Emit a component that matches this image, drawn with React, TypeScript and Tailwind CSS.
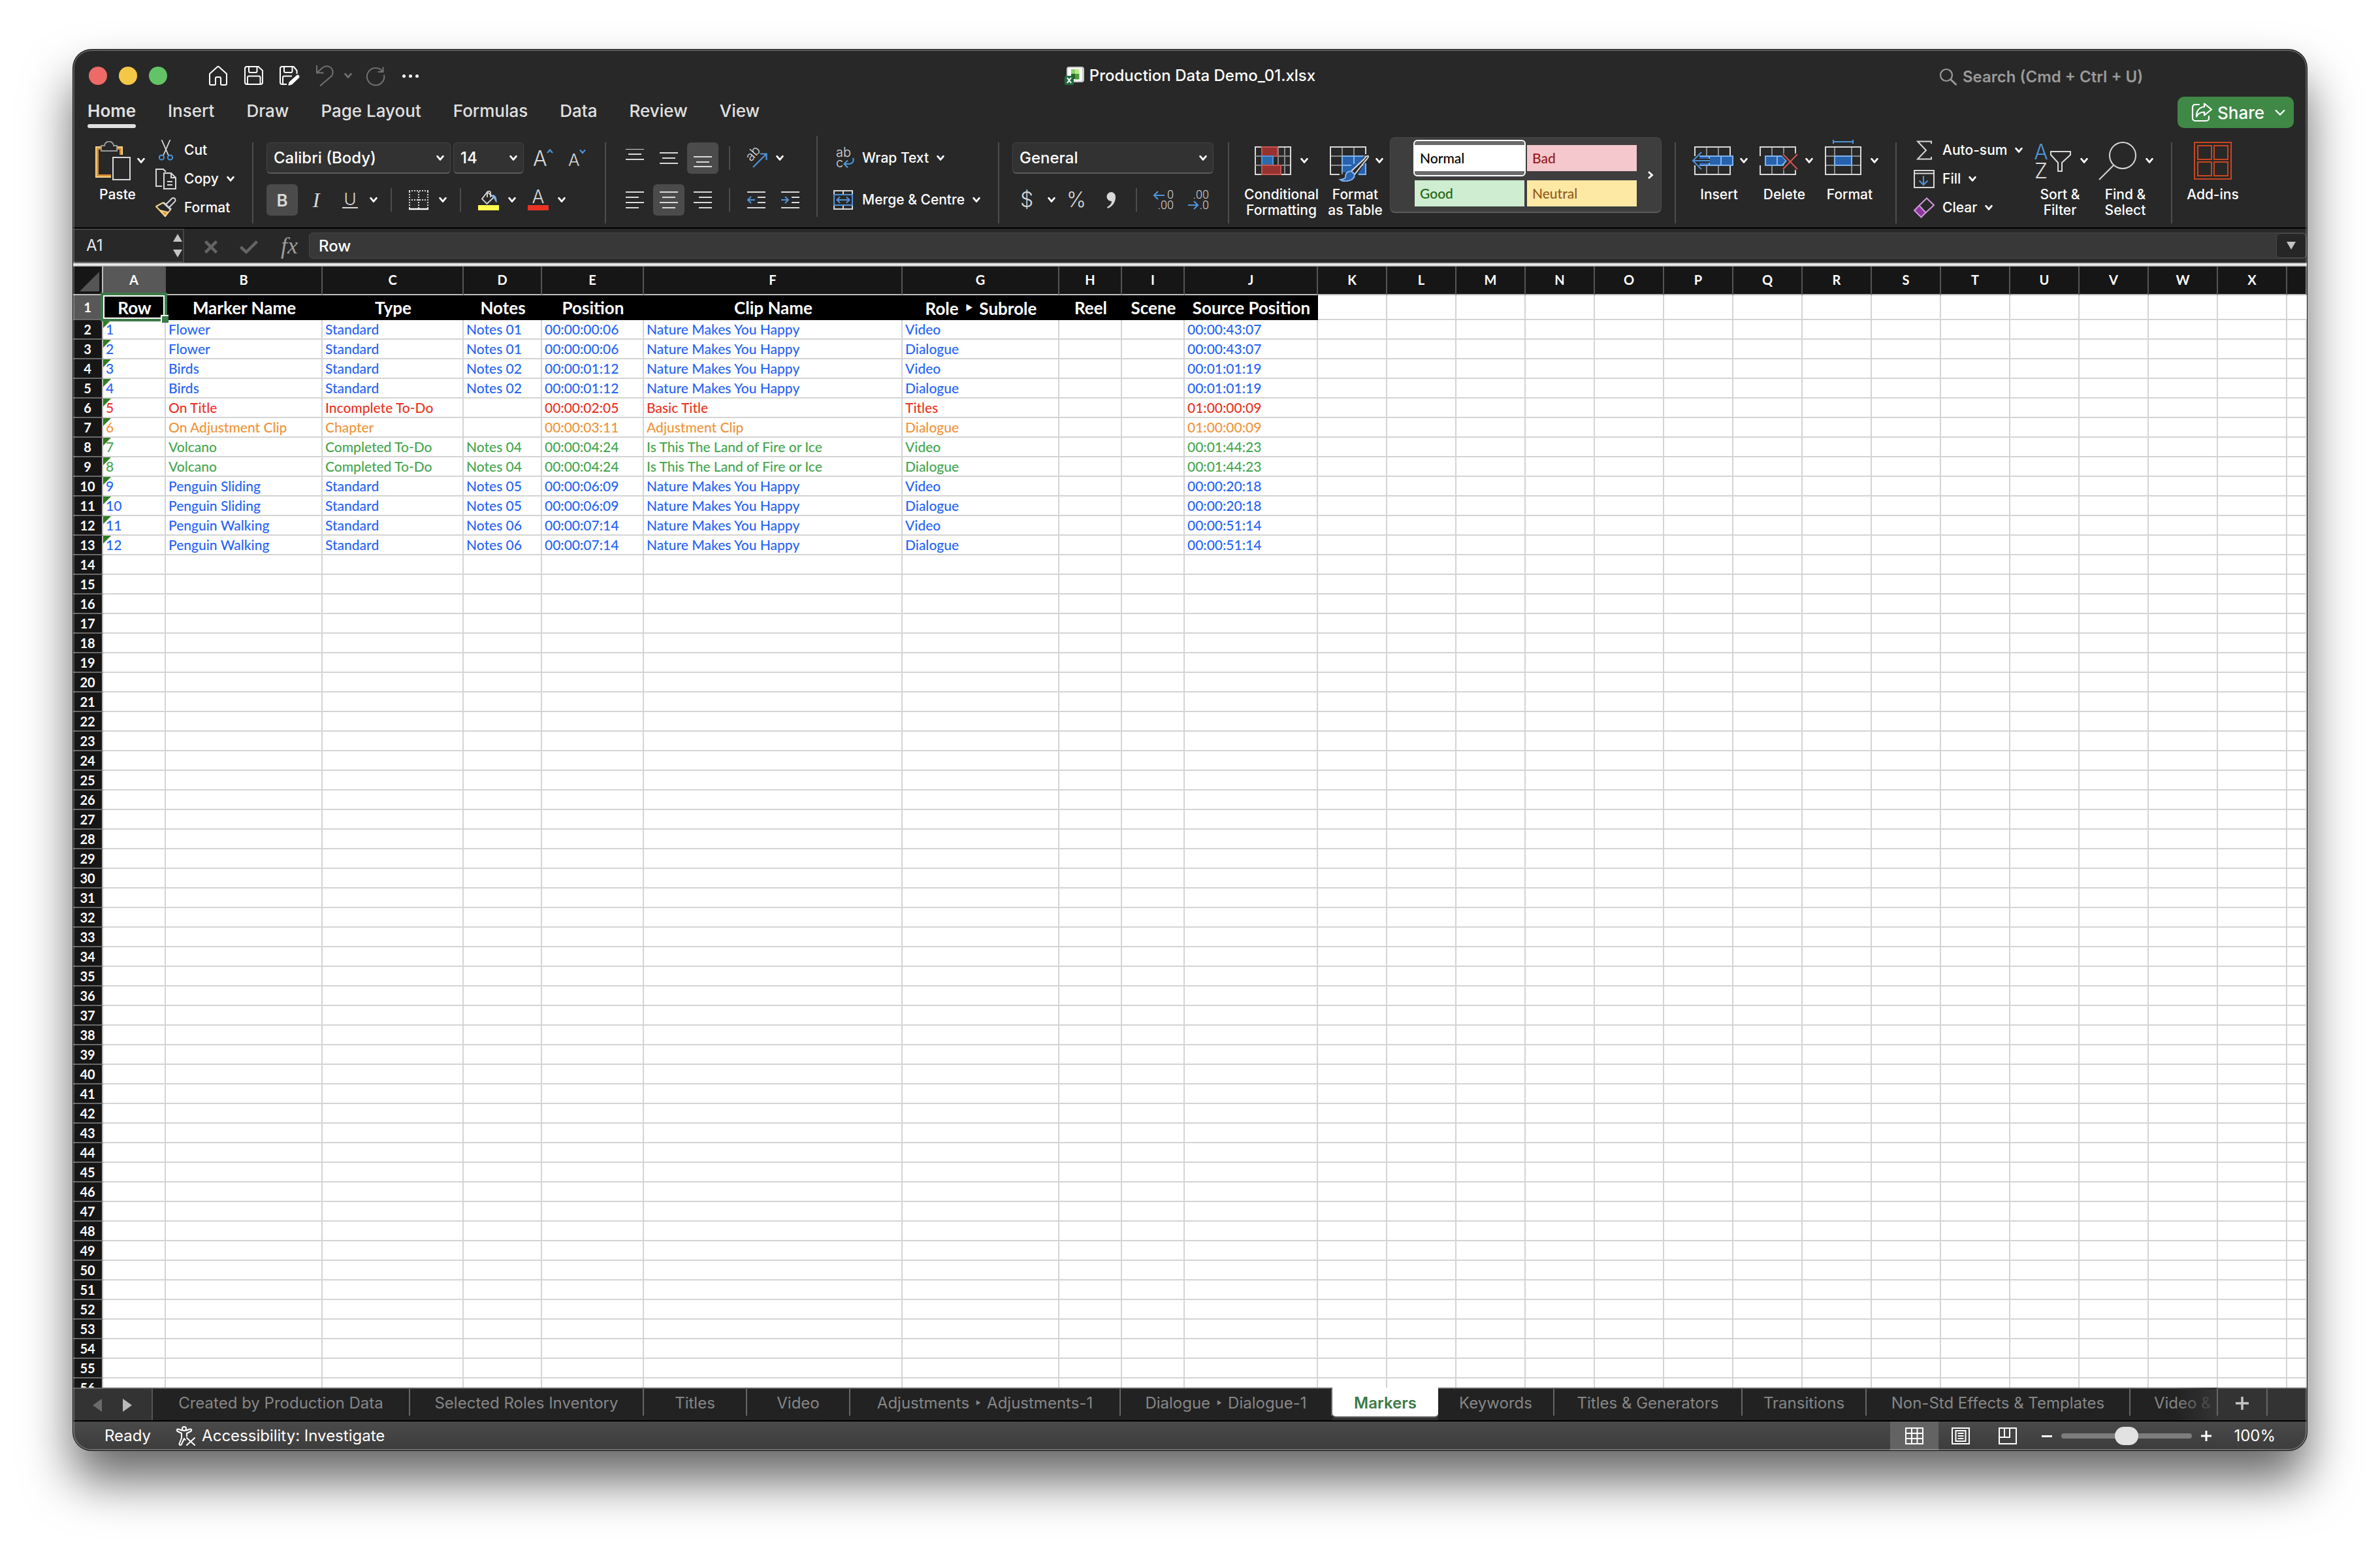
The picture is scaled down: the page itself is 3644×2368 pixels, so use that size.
import React from "react";
import type { ReactNode } from "react";

/* ---------- small pieces ---------- */

const Chevron = ({ className = "" }: { className?: string }) => (
  <svg className={"h-[10px] w-3 shrink-0 " + className} viewBox="0 0 12 10" fill="none" stroke="currentColor" strokeWidth="2.8" strokeLinecap="round" strokeLinejoin="round">
    <path d="M1.6 2.2 6 7.4 10.4 2.2" />
  </svg>
);

const Divider = ({ className = "mt-3" }: { className?: string }) => (
  <div className={"h-[124px] w-0.5 shrink-0 bg-[#4d4d4d] " + className} />
);

const Sep = ({ className = "" }: { className?: string }) => <div className={"h-9 w-0.5 shrink-0 bg-[#4d4d4d] " + className} />;

const BigButton = ({ icon, lines, width, inner }: { icon: ReactNode; lines: string[]; width: string; inner: string }) => (
  <button type="button" className={"flex shrink-0 flex-col text-[21px] leading-6 font-medium text-white " + width}>
    <span className={"flex h-20 w-full items-center " + inner}>
      {icon}
      <Chevron />
    </span>
    <span className="w-full text-center whitespace-nowrap">
      {lines.map((l) => (
        <span key={l} className="block">
          {l}
        </span>
      ))}
    </span>
  </button>
);

const SmallButton = ({ icon, label, chevron = true }: { icon: ReactNode; label: string; chevron?: boolean }) => (
  <button type="button" className="flex h-11 items-center gap-3 text-[21px] leading-6 font-medium whitespace-nowrap text-white">
    <span className="flex w-8 shrink-0 justify-center">{icon}</span>
    {label}
    {chevron && <Chevron />}
  </button>
);

const IconButton = ({ label, active = false, children }: { label: string; active?: boolean; children: ReactNode }) => (
  <button type="button" aria-label={label} className={"flex size-12 shrink-0 items-center justify-center rounded-md text-[#d9d9d9] " + (active ? "bg-[#4b4b4b]" : "")}>
    {children}
  </button>
);

const Picker = ({ label, value, width }: { label: string; value: string; width: string }) => (
  <div className={"relative h-12 shrink-0 " + width}>
    <select aria-label={label} className="h-full w-full appearance-none rounded-md border border-b-2 border-[#454545] border-b-[#5a5a5a] bg-[#323232] pl-2.5 text-2xl font-medium text-white">
      <option>{value}</option>
    </select>
    <Chevron className="pointer-events-none absolute top-[19px] right-2.5 text-white" />
  </div>
);

const Lines = ({ rows }: { rows: [number, number, number][] }) => (
  <svg className="h-7 w-7" viewBox="0 0 28 28" stroke="currentColor" strokeWidth="2" fill="none">
    {rows.map(([x1, x2, y]) => (
      <path key={y} d={`M${x1} ${y}H${x2}`} />
    ))}
  </svg>
);

/* ---------- icons ---------- */

const HomeIcon = () => (
  <svg className="h-8 w-[30px]" viewBox="0 0 30 32" fill="none" stroke="#fff" strokeWidth="2" strokeLinejoin="round">
    <path d="M2 13 13.6 2.6a2 2 0 0 1 2.8 0L28 13v15a2 2 0 0 1-2 2h-5.500a1.500 1.500 0 0 1-1.500-1.500V20a2 2 0 0 0-2-2h-4a2 2 0 0 0-2 2v8.500A1.500 1.500 0 0 1 9.500 30H4a2 2 0 0 1-2-2Z" />
  </svg>
);

const SaveIcon = ({ pen = false }: { pen?: boolean }) => (
  <svg className="h-[30px] w-[32px]" viewBox="0 0 32 30" fill="none" stroke="#fff" strokeWidth="2" strokeLinejoin="round">
    {pen ? (
      <>
        <path d="M27.500 12V7L22.500 1H5a3 3 0 0 0-3 3v21a3 3 0 0 0 3 3h7" />
        <path d="M8 1v7a2 2 0 0 0 2 2h8.500a2 2 0 0 0 2-2V1" />
        <path d="M6 28V17.500a2 2 0 0 1 2-2h12" />
        <path d="M28 13.500a3 3 0 0 1 3.200 4.200L20 28.500l-5.800 1.500 1.500-5.600Z" fill="#fff" stroke="none" />
      </>
    ) : (
      <>
        <path d="M5 1h17.500l6.500 6v18a3 3 0 0 1-3 3H5a3 3 0 0 1-3-3V4a3 3 0 0 1 3-3Z" />
        <path d="M8 1v7a2 2 0 0 0 2 2h8.500a2 2 0 0 0 2-2V1" />
        <path d="M6 28V17.500a2 2 0 0 1 2-2h15.500a2 2 0 0 1 2 2V28" />
      </>
    )}
  </svg>
);

const UndoIcon = () => (
  <svg className="h-8 w-[28px]" viewBox="0 0 28 32" fill="none" stroke="#727272" strokeWidth="2">
    <path d="M2 0v11.500h10.500M2 11.500 11 3.600a9.400 9.400 0 0 1 13.500 13L7 31.500" />
  </svg>
);

const RedoIcon = () => (
  <svg className="h-8 w-[30px]" viewBox="0 0 30 32" fill="none" stroke="#727272" strokeWidth="2">
    <path d="M26.500 2.500v7.500H18.500" />
    <path d="M28 14.500A13.200 13.200 0 1 1 26 9.800" />
  </svg>
);

const ExcelIcon = () => (
  <svg className="h-[30px] w-[30px]" viewBox="0 0 30 30">
    <rect x="3" y="1" width="27" height="24" rx="4" fill="#c9c9c9" />
    <rect x="5" y="3" width="22" height="20" rx="2" fill="#fbfbfb" />
    <rect x="10" y="5" width="6" height="7" fill="#8fd36c" />
    <rect x="16" y="5" width="6.500" height="7" fill="#b5ec8c" />
    <rect x="10" y="12" width="6" height="8" fill="#2c6427" />
    <rect x="16" y="12" width="6.500" height="8.500" fill="#4f9f3d" />
    <rect x="0" y="15" width="14" height="14" rx="2" fill="#1f6b3f" />
    <path d="m4 18 6 8M10 18l-6 8" stroke="#fff" strokeWidth="2" />
  </svg>
);

const PasteIcon = () => (
  <svg className="h-[60px] w-[54px] shrink-0" viewBox="0 0 54 60" fill="none">
    <path d="M8 9H1v46h23M34 9h7v12" stroke="#f4d58a" strokeWidth="2" />
    <path d="M8 11.500H3.500v41H24M34 11.500h4.500V21" stroke="#d99038" strokeWidth="3" />
    <path d="M9 7h5a7 6.500 0 0 1 14 0h5v8H9Z" stroke="#9b9b9b" strokeWidth="2" />
    <rect x="27" y="25" width="26" height="34" stroke="#d9d9d9" strokeWidth="2" />
  </svg>
);

const CutIcon = () => (
  <svg className="h-8 w-[22px]" viewBox="0 0 22 32" fill="none" strokeWidth="2">
    <path d="M4.500 0 15 24M17.500 0 7 24" stroke="#d9d9d9" strokeWidth="1.800" />
    <circle cx="4.500" cy="27" r="3.600" stroke="#4f94d8" />
    <circle cx="17.500" cy="27" r="3.600" stroke="#4f94d8" />
  </svg>
);

const CopyIcon = () => (
  <svg className="h-8 w-8" viewBox="0 0 32 32" fill="none" stroke="#d9d9d9" strokeWidth="2">
    <path d="M10 27H1V1h11l4 4" />
    <path d="M13 7h11l7 7v17H13ZM24 7v7h7M18 20h8M18 25h8" />
  </svg>
);

const BrushIcon = () => (
  <svg className="h-8 w-8" viewBox="0 0 32 32" fill="none" strokeWidth="2" strokeLinejoin="round">
    <path d="m16 11 9-9a3.200 3.200 0 0 1 4.600 4.600L21 15.500" stroke="#d9d9d9" />
    <path d="M12 8 1 14l14 15 8-10" stroke="#f4d58a" />
    <path d="m7 20 12 3-4 6Z" fill="#d99038" stroke="#f4d58a" />
    <path d="M12 8 24 19" stroke="#d9d9d9" strokeWidth="3" />
  </svg>
);

const ResizeLetter = ({ up }: { up: boolean }) => (
  <svg className="h-8 w-[30px] overflow-visible" viewBox="0 0 30 32" fill="none">
    <text x="0" y="28" fontFamily="Inter" fontWeight="300" fontSize={up ? 32 : 26} fill="#d9d9d9">
      A
    </text>
    <path d={up ? "m22 8 4-4.500 4 4.500" : "m18 3.500 4 4.500 4-4.500"} stroke="#4f94d8" strokeWidth="2.200" />
  </svg>
);

const BorderIcon = () => (
  <svg className="h-8 w-[30px]" viewBox="0 0 30 32" fill="none" stroke="#d9d9d9" strokeWidth="2">
    <path d="M0 2h30M0 16h30M1 3v26M15 3v26M29 3v26" strokeDasharray="2 2" />
    <path d="M0 30h30" stroke="#fff" strokeWidth="2.400" />
  </svg>
);

const FillColorIcon = () => (
  <svg className="h-8 w-8" viewBox="0 0 32 32" fill="none" strokeWidth="1.800">
    <rect y="24" width="32" height="8" fill="#ffff4f" />
    <path d="m14 4-8 10.500 7.500 7.500L24 12Z" stroke="#d9d9d9" />
    <path d="M14 12V4a3 3 0 0 1 5 0v8" stroke="#d9d9d9" />
    <path d="M22 8c5 0 7 5 6.500 12-3-1-3-7-6.500-8Z" fill="#7fb4e6" />
  </svg>
);

const FontColorIcon = () => (
  <svg className="h-8 w-8 overflow-visible" viewBox="0 0 32 32">
    <rect y="24" width="32" height="8" fill="#e93323" />
    <text x="16" y="21" textAnchor="middle" fontFamily="Inter" fontWeight="300" fontSize="28" fill="#d9d9d9">
      A
    </text>
  </svg>
);

const OrientationIcon = () => (
  <svg className="h-8 w-8 overflow-visible" viewBox="0 0 32 32" fill="none">
    <text x="8" y="22" transform="rotate(-48 8 22)" fontFamily="Inter" fontWeight="300" fontSize="20" fill="#d9d9d9">
      ab
    </text>
    <path d="M11 30 31 10M22 9.500h9.500V19" stroke="#4f94d8" strokeWidth="2.200" />
  </svg>
);

const DentIcon = ({ out }: { out: boolean }) => (
  <svg className="h-7 w-7 shrink-0" viewBox="0 0 28 28" fill="none" stroke="#d9d9d9" strokeWidth="2">
    <path d="M0 2h28M16 10h12M16 18h12M0 26h28" />
    <path d={out ? "M12 14H1M6 9l-5 5 5 5" : "M0 14h11M6 9l5 5-5 5"} stroke="#4f94d8" />
  </svg>
);

const WrapIcon = () => (
  <svg className="h-8 w-8 shrink-0 overflow-visible" viewBox="0 0 32 32" fill="none">
    <text x="4" y="14" fontFamily="Inter" fontWeight="300" fontSize="20" fill="#d9d9d9">
      ab
    </text>
    <text x="4" y="30" fontFamily="Inter" fontWeight="300" fontSize="20" fill="#d9d9d9">
      c
    </text>
    <path d="M30 16c2 5-1 9-7 9h-6M22 19.500 16.500 25l5.500 5.500" stroke="#4f94d8" strokeWidth="2.200" />
  </svg>
);

const MergeIcon = () => (
  <svg className="h-8 w-8 shrink-0" viewBox="0 0 32 32" fill="none" strokeWidth="2">
    <path d="M1 7V2h28v5M1 25v5h28v-5M15 2v5M15 25v5" stroke="#d9d9d9" />
    <rect x="1" y="8" width="28" height="16" stroke="#4f94d8" />
    <path d="M6 16h18M10 11.500 5.500 16l4.500 4.500M20 11.500l4.500 4.500-4.500 4.500" stroke="#4f94d8" />
  </svg>
);

const DecimalIcon = ({ more }: { more: boolean }) => (
  <svg className="h-8 w-8 shrink-0 overflow-visible" viewBox="0 0 32 32" fill="none">
    <text x="32" y="14" textAnchor="end" fontFamily="Roboto" fontWeight="300" fontSize="18" fill="#d9d9d9">
      {more ? "0" : ".00"}
    </text>
    <text x="32" y="30" textAnchor="end" fontFamily="Roboto" fontWeight="300" fontSize="18" fill="#d9d9d9">
      {more ? ".00" : ".0"}
    </text>
    <path d={more ? "M18 9H2M8 3 2 9l6 6" : "M0 24h15M9 18l6 6-6 6"} stroke="#4f94d8" strokeWidth="2.200" />
  </svg>
);

const ConditionalIcon = () => (
  <svg className="h-11 w-14 shrink-0" viewBox="0 0 56 44" fill="none" strokeWidth="2">
    <path d="M10 15h45M10 29h45M46 1v42M36 1v42" stroke="#8c8c8c" />
    <rect x="1" y="1" width="54" height="42" stroke="#d9d9d9" />
    <path d="M1 15h9M1 29h9" stroke="#8c8c8c" />
    <rect x="11" y="1" width="24" height="14" fill="#963331" stroke="#c9544f" />
    <rect x="11" y="15" width="17" height="14" fill="#2f6aa8" stroke="#4f94d8" />
    <rect x="11" y="29" width="29" height="14" fill="#963331" stroke="#c9544f" />
  </svg>
);

const TableIcon = () => (
  <svg className="mt-2.5 h-[54px] w-[60px] shrink-0" viewBox="0 0 60 54" fill="none" strokeWidth="2">
    <path d="M1 15h54M1 29h54M19 1v42M37 1v42" stroke="#8c8c8c" />
    <path d="M55 12V1H1v42h14" stroke="#d9d9d9" />
    <path d="M19 15h34L38 40H19Z" fill="#2862ad" stroke="none" />
    <path d="M42 43h13V24Z" fill="#2862ad" />
    <path d="M19 40V15h32M19 29h14M37 15v12M44 43h11V26" stroke="#7fb4f0" />
    <path d="M59 15c-2-1-5 2-7 5L33 38l5 5 15-19c3-4 7-7 6-9Z" fill="#282828" stroke="#d9d9d9" />
    <path d="M33 38c-7 0-9 4-9 9 0 2-4 4-8 4 5 4 22 3 22-8Z" fill="#2862ad" stroke="#7fb4f0" />
  </svg>
);

const GridBase = ({ x = 0 }: { x?: number }) => (
  <>
    <path d={`M${x + 19} 1v42M${x + 37} 1v42`} stroke="#8c8c8c" />
    <path d={`M${x + 1} 15V1h54v14M${x + 1} 29v14h54V29`} stroke="#d9d9d9" />
  </>
);

const InsertIcon = () => (
  <svg className="h-11 w-16 shrink-0" viewBox="0 0 64 44" fill="none" strokeWidth="2">
    <GridBase x={4} />
    <rect x="12" y="14" width="51" height="15" fill="#2862ad" />
    <path d="M12 15h51v14H12M27 15v14M45 15v14" stroke="#7fb4f0" />
    <path d="M28 22H4" stroke="#282828" strokeWidth="6" />
    <path d="M28 22H2M15 9 2 22l13 13" stroke="#4f94d8" />
  </svg>
);

const DeleteIcon = () => (
  <svg className="h-11 w-[60px] shrink-0" viewBox="0 0 60 44" fill="none" strokeWidth="2">
    <GridBase />
    <path d="M9 15h26l6 7-6 7H9Z" fill="#2862ad" stroke="#7fb4f0" />
    <path d="M27 15v14" stroke="#7fb4f0" />
    <path d="m36 12 22 23M58 12 36 35" stroke="#282828" strokeWidth="6" />
    <path d="m36 12 22 23M58 12 36 35" stroke="#d9524d" />
  </svg>
);

const FormatIcon = () => (
  <svg className="mb-2.5 h-[54px] w-14 shrink-0" viewBox="0 0 56 54" fill="none" strokeWidth="2">
    <path d="M13 0v6M43 0v6M13 3h30" stroke="#4f94d8" />
    <path d="M1 25h54M1 39h54M15 11v42M41 11v42" stroke="#8c8c8c" />
    <rect x="1" y="11" width="54" height="42" stroke="#d9d9d9" />
    <rect x="15" y="25" width="26" height="14" fill="#2862ad" stroke="#7fb4f0" />
  </svg>
);

const SumIcon = () => (
  <svg className="h-[30px] w-6" viewBox="0 0 24 30" fill="none" stroke="#d9d9d9" strokeWidth="2">
    <path d="M23 5V1.500H2L15 15 2 28.500h21V25" />
  </svg>
);

const FillIcon = () => (
  <svg className="h-7 w-8" viewBox="0 0 32 28" fill="none" stroke="#d9d9d9" strokeWidth="2">
    <rect x="1" y="1" width="30" height="26" />
    <path d="M1 5.500h30" />
    <path d="M15 9v14M8.500 16.500 15 23l6.500-6.500" stroke="#4f94d8" />
  </svg>
);

const ClearIcon = () => (
  <svg className="h-8 w-8" viewBox="0 0 32 32" fill="none" stroke="#cf96dc" strokeWidth="2">
    <path d="M1 20 8.500 12.500 18.500 23.500 11.500 30.500Z" fill="#8d37a0" />
    <path d="M8.500 12.500 20 1.500 31 12 18.500 23.500" />
  </svg>
);

const SortIcon = () => (
  <svg className="h-[60px] w-14 shrink-0 overflow-visible" viewBox="0 0 56 60" fill="none">
    <text x="10" y="28" textAnchor="middle" fontFamily="Inter" fontWeight="300" fontSize="32" fill="#4f94d8">
      A
    </text>
    <text x="10" y="57" textAnchor="middle" fontFamily="Inter" fontWeight="300" fontSize="32" fill="#d9d9d9">
      Z
    </text>
    <path d="M25 16h30v5L42 33v13h-6V33L25 21Z" stroke="#d9d9d9" strokeWidth="2" />
  </svg>
);

const FindIcon = () => (
  <svg className="h-[60px] w-[58px] shrink-0" viewBox="0 0 58 60" fill="none" stroke="#d9d9d9" strokeWidth="2">
    <circle cx="37" cy="22" r="20" />
    <path d="M23 37 1 59" />
  </svg>
);

const AddInsIcon = () => (
  <svg className="h-[58px] w-[58px]" viewBox="0 0 58 58" fill="none" stroke="#c8461f" strokeWidth="2">
    <rect x="1" y="1" width="56" height="56" />
    <rect x="6" y="6" width="21" height="21" />
    <rect x="31" y="6" width="21" height="21" />
    <rect x="6" y="31" width="21" height="21" />
    <rect x="31" y="31" width="21" height="21" />
  </svg>
);

const ShareIcon = () => (
  <svg className="h-[30px] w-8 shrink-0" viewBox="0 0 32 30" fill="none" stroke="#fff" strokeWidth="2.200" strokeLinejoin="round" strokeLinecap="round">
    <path d="M12 3H6a4 4 0 0 0-4 4v17a4 4 0 0 0 4 4h17a4 4 0 0 0 4-4v-3" />
    <path d="M20 1.500 31 10.500 20 19.500v-5c-6 0-9.500 2-12 7C8 13 12 7 20 6.500Z" />
  </svg>
);

const AccessibilityIcon = () => (
  <svg className="h-[30px] w-[30px]" viewBox="0 0 30 30" fill="none" stroke="#fff" strokeWidth="2" strokeLinejoin="round" strokeLinecap="round">
    <circle cx="13" cy="4" r="3" />
    <path d="M9.500 6.500 4 4.500c-2.500-.500-3 2.500-1 3.500l6 3v7L5.500 27c0 2.500 3 2.500 3.500.500L13 19l1.500 2M16.500 6.500 22 4.500c2.500-.500 3 2.500 1 3.500l-6 3v4.500" />
    <path d="m17 18 12 11M29 18 17 29" />
  </svg>
);

/* ---------- data ---------- */

const MENU = ["Home", "Insert", "Draw", "Page Layout", "Formulas", "Data", "Review", "View"];

const EXTRA = ["K", "L", "M", "N", "O", "P", "Q", "R", "S", "T", "U", "V", "W", "X"];
const LETTERS = ["A", "B", "C", "D", "E", "F", "G", "H", "I", "J", ...EXTRA, ""];
const HEADINGS = ["Row", "Marker Name", "Type", "Notes", "Position", "Clip Name", "Role ‣ Subrole", "Reel", "Scene", "Source Position"];

const BLUE = "text-[#2764f6]";
const RED = "text-[#ea3323]";
const ORANGE = "text-[#f0943a]";
const GREEN = "text-[#46a64f]";

const NATURE = "Nature Makes You Happy";
const LAND = "Is This The Land of Fire or Ice";

const ROWS: { color: string; cells: string[] }[] = [
  { color: BLUE, cells: ["1", "Flower", "Standard", "Notes 01", "00:00:00:06", NATURE, "Video", "", "", "00:00:43:07"] },
  { color: BLUE, cells: ["2", "Flower", "Standard", "Notes 01", "00:00:00:06", NATURE, "Dialogue", "", "", "00:00:43:07"] },
  { color: BLUE, cells: ["3", "Birds", "Standard", "Notes 02", "00:00:01:12", NATURE, "Video", "", "", "00:01:01:19"] },
  { color: BLUE, cells: ["4", "Birds", "Standard", "Notes 02", "00:00:01:12", NATURE, "Dialogue", "", "", "00:01:01:19"] },
  { color: RED, cells: ["5", "On Title", "Incomplete To-Do", "", "00:00:02:05", "Basic Title", "Titles", "", "", "01:00:00:09"] },
  { color: ORANGE, cells: ["6", "On Adjustment Clip", "Chapter", "", "00:00:03:11", "Adjustment Clip", "Dialogue", "", "", "01:00:00:09"] },
  { color: GREEN, cells: ["7", "Volcano", "Completed To-Do", "Notes 04", "00:00:04:24", LAND, "Video", "", "", "00:01:44:23"] },
  { color: GREEN, cells: ["8", "Volcano", "Completed To-Do", "Notes 04", "00:00:04:24", LAND, "Dialogue", "", "", "00:01:44:23"] },
  { color: BLUE, cells: ["9", "Penguin Sliding", "Standard", "Notes 05", "00:00:06:09", NATURE, "Video", "", "", "00:00:20:18"] },
  { color: BLUE, cells: ["10", "Penguin Sliding", "Standard", "Notes 05", "00:00:06:09", NATURE, "Dialogue", "", "", "00:00:20:18"] },
  { color: BLUE, cells: ["11", "Penguin Walking", "Standard", "Notes 06", "00:00:07:14", NATURE, "Video", "", "", "00:00:51:14"] },
  { color: BLUE, cells: ["12", "Penguin Walking", "Standard", "Notes 06", "00:00:07:14", NATURE, "Dialogue", "", "", "00:00:51:14"] },
];

const SHEETS: { name: string; width: string }[] = [
  { name: "Created by Production Data", width: "w-[394px]" },
  { name: "Selected Roles Inventory", width: "w-[358px]" },
  { name: "Titles", width: "w-[158px]" },
  { name: "Video", width: "w-[158px]" },
  { name: "Adjustments ‣ Adjustments-1", width: "w-[414px]" },
  { name: "Dialogue ‣ Dialogue-1", width: "w-[324px]" },
  { name: "Markers", width: "w-[162px]" },
  { name: "Keywords", width: "w-[178px]" },
  { name: "Titles & Generators", width: "w-[288px]" },
  { name: "Transitions", width: "w-[190px]" },
  { name: "Non-Std Effects & Templates", width: "w-[404px]" },
];

const STYLES: { name: string; color: string }[] = [
  { name: "Normal", color: "bg-white text-black" },
  { name: "Bad", color: "bg-[#f5c8cd] text-[#971a1a]" },
  { name: "Good", color: "bg-[#cfedd1] text-[#1f6413]" },
  { name: "Neutral", color: "bg-[#fde9a4] text-[#925a1c]" },
];

/* ---------- sections ---------- */

const TitleBar = () => (
  <header className="grid h-[72px] shrink-0 grid-cols-[1fr_auto_1fr] items-center pt-2">
    <div className="flex items-center pl-6">
      <div className="flex gap-[18px]">
        <button type="button" aria-label="Close" className="size-7 rounded-full bg-[#ed6a66]" />
        <button type="button" aria-label="Minimise" className="size-7 rounded-full bg-[#f4c846]" />
        <button type="button" aria-label="Zoom" className="size-7 rounded-full bg-[#62c466]" />
      </div>
      <button type="button" aria-label="Home" className="ml-[63px]"><HomeIcon /></button>
      <button type="button" aria-label="Save" className="ml-6"><SaveIcon /></button>
      <button type="button" aria-label="Save as" className="ml-[22px]"><SaveIcon pen /></button>
      <button type="button" aria-label="Undo" className="ml-6"><UndoIcon /></button>
      <button type="button" aria-label="Undo list" className="ml-4 text-[#727272]"><Chevron /></button>
      <button type="button" aria-label="Redo" className="ml-[21px]"><RedoIcon /></button>
      <button type="button" aria-label="More" className="ml-[26px] flex gap-[5px]">
        <span className="size-[5px] rounded-full bg-white" />
        <span className="size-[5px] rounded-full bg-white" />
        <span className="size-[5px] rounded-full bg-white" />
      </button>
    </div>
    <h1 className="flex items-center gap-2 text-2xl font-medium text-white">
      <ExcelIcon />
      Production Data Demo_01.xlsx
    </h1>
    <label className="flex items-center justify-end gap-2 pt-1 pr-[239px] text-[#9a9a9a]">
      <svg className="h-7 w-7" viewBox="0 0 28 28" fill="none" stroke="currentColor" strokeWidth="2.200">
        <circle cx="11" cy="11" r="9" />
        <path d="m17.500 17.500 9 8.500" strokeWidth="3" />
      </svg>
      <input aria-label="Search" placeholder="Search (Cmd + Ctrl + U)" className="w-[288px] bg-transparent text-2xl font-semibold outline-none placeholder:text-[#9a9a9a]" />
    </label>
  </header>
);

const MenuBar = () => (
  <nav className="flex h-12 shrink-0 pr-5 pl-[22px]">
    <div className="flex gap-[49px]">
      {MENU.map((m, i) => (
        <button key={m} type="button" className={"flex h-12 flex-col text-[26px] text-[#e0e0e0] " + (i === 0 ? "font-semibold" : "font-medium")}>
          <span className="flex h-[42px] items-center">{m}</span>
          {i === 0 && <span className="h-1.5 w-full rounded-full bg-[#e0e0e0]" />}
        </button>
      ))}
    </div>
    <button type="button" className="ml-auto flex h-12 w-[178px] items-center rounded-[10px] bg-[#3f8846] pl-[21px] text-[26px] font-medium text-white">
      <ShareIcon />
      <span className="ml-2">Share</span>
      <svg className="ml-4 h-[10px] w-4" viewBox="0 0 16 10" fill="none" stroke="#fff" strokeWidth="2.200">
        <path d="m1 1.500 7 7 7-7" />
      </svg>
    </button>
  </nav>
);

const Ribbon = () => (
  <section aria-label="Home ribbon" className="flex h-[154px] shrink-0 border-b-2 border-black pt-2.5 text-white">
    <div className="flex w-[274px] shrink-0 gap-4 pl-[26px]">
      <BigButton icon={<PasteIcon />} lines={["Paste"]} width="w-[84px]" inner="pl-2 gap-2.5" />
      <div className="pt-0.5">
        <SmallButton icon={<CutIcon />} label="Cut" chevron={false} />
        <SmallButton icon={<CopyIcon />} label="Copy" />
        <SmallButton icon={<BrushIcon />} label="Format" chevron={false} />
      </div>
    </div>
    <Divider />
    <div className="flex w-[538px] shrink-0 flex-col gap-4 pt-3 pl-5">
      <div className="flex h-12 items-center">
        <Picker label="Font" value="Calibri (Body)" width="w-[282px]" />
        <div className="w-1" />
        <Picker label="Font size" value="14" width="w-[108px]" />
        <button type="button" aria-label="Increase font size" className="ml-3.5"><ResizeLetter up /></button>
        <button type="button" aria-label="Decrease font size" className="ml-6"><ResizeLetter up={false} /></button>
      </div>
      <div className="flex h-12 items-center">
        <IconButton label="Bold" active><span className="text-[26px] font-semibold">B</span></IconButton>
        <div className="w-1" />
        <IconButton label="Italic"><span className="font-['Liberation_Serif'] text-[32px] italic">I</span></IconButton>
        <div className="w-1" />
        <IconButton label="Underline"><span className="border-b-2 border-[#d9d9d9] px-0.5 text-[26px] leading-6 font-light">U</span></IconButton>
        <Chevron className="ml-1.5" />
        <Sep className="ml-5" />
        <button type="button" aria-label="Borders" className="ml-[26px]"><BorderIcon /></button>
        <Chevron className="ml-4" />
        <Sep className="ml-5" />
        <button type="button" aria-label="Fill colour" className="ml-[26px]"><FillColorIcon /></button>
        <Chevron className="ml-3.5" />
        <button type="button" aria-label="Font colour" className="ml-[18px]"><FontColorIcon /></button>
        <Chevron className="ml-3.5" />
      </div>
    </div>
    <Divider />
    <div className="flex w-[322px] shrink-0 flex-col gap-4 pt-3 pl-5">
      <div className="flex h-12 items-center">
        <div className="flex gap-1">
          <IconButton label="Top align"><Lines rows={[[0, 28, 0], [4, 24, 8], [0, 28, 16]]} /></IconButton>
          <IconButton label="Middle align"><Lines rows={[[0, 28, 6], [4, 24, 14], [0, 28, 22]]} /></IconButton>
          <IconButton label="Bottom align" active><Lines rows={[[0, 28, 12], [4, 24, 20], [0, 28, 27]]} /></IconButton>
        </div>
        <Sep className="ml-4" />
        <button type="button" aria-label="Orientation" className="ml-6"><OrientationIcon /></button>
        <Chevron className="ml-3.5" />
      </div>
      <div className="flex h-12 items-center">
        <div className="flex gap-1">
          <IconButton label="Align left"><Lines rows={[[0, 28, 2], [0, 20, 10], [0, 28, 18], [0, 20, 26]]} /></IconButton>
          <IconButton label="Centre" active><Lines rows={[[0, 28, 2], [4, 24, 10], [0, 28, 18], [4, 24, 26]]} /></IconButton>
          <IconButton label="Align right"><Lines rows={[[0, 28, 2], [8, 28, 10], [0, 28, 18], [8, 28, 26]]} /></IconButton>
        </div>
        <Sep className="ml-4" />
        <button type="button" aria-label="Decrease indent" className="ml-[26px]"><DentIcon out /></button>
        <button type="button" aria-label="Increase indent" className="ml-6"><DentIcon out={false} /></button>
      </div>
    </div>
    <Divider className="mt-0.5" />
    <div className="flex w-[276px] shrink-0 flex-col gap-4 pt-3 pl-6 text-[21px] font-medium">
      <button type="button" className="flex h-12 items-center gap-3 whitespace-nowrap"><WrapIcon />Wrap Text<Chevron /></button>
      <button type="button" className="flex h-12 items-center gap-3 whitespace-nowrap"><MergeIcon />Merge &amp; Centre<Chevron /></button>
    </div>
    <Divider />
    <div className="flex w-[350px] shrink-0 flex-col gap-4 pt-3 pl-5">
      <Picker label="Number format" value="General" width="w-[308px]" />
      <div className="flex h-12 items-center text-[#d9d9d9]">
        <button type="button" aria-label="Currency" className="ml-3 w-5 text-[32px] font-light">$</button>
        <Chevron className="ml-[22px] text-white" />
        <button type="button" aria-label="Percent" className="ml-4 w-8 text-[32px] font-light">%</button>
        <button type="button" aria-label="Comma style" className="ml-7">
          <svg className="h-7 w-5" viewBox="0 0 20 28" fill="#d9d9d9">
            <path d="M9 2a7 7 0 0 1 7 8c0 8-5 14-12 17l-1-2c4-2 7-5 7-9a7 7 0 1 1-1-14Z" />
          </svg>
        </button>
        <Sep className="ml-[27px]" />
        <button type="button" aria-label="Increase decimal" className="ml-6"><DecimalIcon more /></button>
        <button type="button" aria-label="Decrease decimal" className="ml-[22px]"><DecimalIcon more={false} /></button>
      </div>
    </div>
    <Divider />
    <div className="flex w-[682px] shrink-0 pl-5">
      <BigButton icon={<ConditionalIcon />} lines={["Conditional", "Formatting"]} width="w-[120px]" inner="pl-[19px] gap-3.5" />
      <BigButton icon={<TableIcon />} lines={["Format", "as Table"]} width="w-[106px]" inner="pl-3.5 gap-2.5" />
      <div className="mt-1 flex h-[116px] w-[416px] rounded-lg border border-b-2 border-[#4a4a4a] border-b-[#5c5c5c] bg-[#3e3e3e] pl-[37px]">
        <div className="mt-[11px] grid h-fit grid-cols-[168px_168px] gap-x-1 gap-y-3.5">
          {STYLES.map((s, i) => (
            <div key={s.name} className="relative h-10">
              {i === 0 && <span className="absolute -inset-x-0.5 -inset-y-2 rounded-md border-2 border-white bg-[#6b6b6b]" />}
              <button type="button" className={"relative h-10 w-full pl-2 text-left font-['Lato'] text-[21px] font-medium " + s.color}>{s.name}</button>
            </div>
          ))}
        </div>
        <button type="button" aria-label="More styles" className="ml-4 w-3">
          <svg className="h-3.5 w-2.5" viewBox="0 0 10 14" fill="none" stroke="#fff" strokeWidth="2.800"><path d="m2 2 5.500 5L2 12" /></svg>
        </button>
      </div>
    </div>
    <Divider />
    <div className="flex w-[336px] shrink-0 pl-4">
      <BigButton icon={<InsertIcon />} lines={["Insert"]} width="w-[100px]" inner="pl-2 gap-2.5" />
      <BigButton icon={<DeleteIcon />} lines={["Delete"]} width="w-[100px]" inner="pl-3 gap-2.5" />
      <BigButton icon={<FormatIcon />} lines={["Format"]} width="w-[100px]" inner="pl-3 gap-3.5" />
    </div>
    <Divider />
    <div className="flex w-[420px] shrink-0 pl-[26px]">
      <div className="w-[174px] pt-0.5">
        <SmallButton icon={<SumIcon />} label="Auto-sum" />
        <SmallButton icon={<FillIcon />} label="Fill" />
        <SmallButton icon={<ClearIcon />} label="Clear" />
      </div>
      <BigButton icon={<SortIcon />} lines={["Sort &", "Filter"]} width="w-[100px]" inner="pl-[11px] gap-3.5" />
      <BigButton icon={<FindIcon />} lines={["Find &", "Select"]} width="w-[100px]" inner="pl-[9px] gap-3.5" />
    </div>
    <Divider />
    <button type="button" className="ml-3 flex h-[104px] w-[100px] shrink-0 flex-col items-center text-[21px] leading-6 font-medium whitespace-nowrap">
      <span className="flex h-20 items-center"><AddInsIcon /></span>
      Add-ins
    </button>
  </section>
);

const FormulaBar = () => (
  <section aria-label="Formula bar" className="flex h-[52px] shrink-0 items-center">
    <div className="flex h-[52px] w-[170px] items-center border-2 border-l-0 border-[#454545] pl-5">
      <input aria-label="Name box" defaultValue="A1" className="w-[133px] bg-transparent text-2xl text-[#e6e6e6] outline-none" />
      <div className="flex flex-col gap-3">
        <button type="button" aria-label="Previous" className="h-3 w-3.5 bg-[#c4c4c4] [clip-path:polygon(50%_0,100%_100%,0_100%)]" />
        <button type="button" aria-label="Next" className="h-3 w-3.5 bg-[#c4c4c4] [clip-path:polygon(0_0,100%_0,50%_100%)]" />
      </div>
    </div>
    <button type="button" aria-label="Cancel" className="mt-1 ml-[31px]">
      <svg className="size-5" viewBox="0 0 20 20" stroke="#646464" strokeWidth="4.500"><path d="m1.500 1.500 17 17M18.500 1.500l-17 17" /></svg>
    </button>
    <button type="button" aria-label="Enter" className="mt-1 ml-[34px]">
      <svg className="h-5 w-7" viewBox="0 0 28 20" fill="none" stroke="#646464" strokeWidth="4.500"><path d="m1.500 10 8.500 8L26.500 1.500" /></svg>
    </button>
    <button type="button" aria-label="Insert function" className="ml-7 w-10 font-['Liberation_Serif'] text-4xl leading-10 text-[#9c9c9c] italic">fx</button>
    <div className="ml-2.5 flex h-10 flex-1 items-center rounded-md border border-[#484848] bg-[#383838]">
      <input aria-label="Formula" defaultValue="Row" className="h-full flex-1 bg-transparent pl-3.5 text-2xl font-medium text-white outline-none" />
      <button type="button" aria-label="Expand formula bar" className="flex h-[38px] w-[46px] items-center justify-center rounded-md border border-[#484848] bg-[#262626]">
        <span className="h-3 w-3.5 bg-[#c4c4c4] [clip-path:polygon(0_0,100%_0,50%_100%)]" />
      </button>
    </div>
  </section>
);

const Heading = ({ text }: { text: string }) => {
  const [left, right] = text.split(" ‣ ");
  return right ? (
    <>
      {left} <span className="mx-1 text-3xl leading-7">‣</span> {right}
    </>
  ) : (
    <>{text}</>
  );
};

const Sheet = () => (
  <main className="min-h-0 flex-1 overflow-hidden bg-white font-['Lato']">
    <table className="w-full table-fixed border-separate border-spacing-0">
      <colgroup>
        <col className="w-[46px]" />
        <col className="w-24" />
        <col className="w-60" />
        <col className="w-54" />
        <col className="w-30" />
        <col className="w-39" />
        <col className="w-99" />
        <col className="w-60" />
        <col className="w-24" />
        <col className="w-24" />
        <col className="w-51" />
        {EXTRA.map((c) => (
          <col key={c} className="w-[106px]" />
        ))}
        <col />
      </colgroup>
      <thead>
        <tr className="h-11 text-xl text-white">
          <td className="relative border-r-2 border-b-2 border-[#bdbdbd] bg-[#161616] p-0">
            <span className="absolute right-1 bottom-1 size-[30px] bg-[#555] [clip-path:polygon(100%_0,100%_100%,0_100%)]" />
          </td>
          {LETTERS.map((l, i) => (
            <th key={l} scope="col" className={"border-r-2 border-b-2 border-r-[#555] border-b-[#bdbdbd] p-0 pb-0.5 font-bold " + (i === 0 ? "bg-[#585858]" : "bg-[#161616]")}>
              {l}
            </th>
          ))}
        </tr>
      </thead>
      <tbody>
        <tr className="h-[38px]">
          <th scope="row" className="border-r-2 border-b-2 border-r-[#bdbdbd] border-b-[#6a6a6a] bg-[#585858] p-0 text-xl leading-6 text-white">1</th>
          {HEADINGS.map((h, i) => (
            <td key={h} className="relative bg-black p-0 text-center text-[26px] leading-7 font-bold whitespace-nowrap text-white">
              <Heading text={h} />
              {i === 0 && (
                <>
                  <span className="absolute -top-1 -right-0.5 -bottom-0.5 -left-1 z-10 border-4 border-[#3c7a47]">
                    <span className="block h-full w-full border-2 border-white" />
                  </span>
                  <span className="absolute -right-1 -bottom-1 z-20 size-3 border-t-2 border-l-2 border-white bg-[#3c7a47]" />
                </>
              )}
            </td>
          ))}
          {EXTRA.map((c) => (
            <td key={c} className="border-r-2 border-b-2 border-[#d4d4d4] p-0" />
          ))}
          <td className="border-b-2 border-[#d4d4d4] p-0" />
        </tr>
        {Array.from({ length: 55 }, (_, r) => {
          const row = ROWS[r];
          return (
            <tr key={r} className="h-[30px]">
              <th scope="row" className="border-r-2 border-b-2 border-r-[#bdbdbd] border-b-[#6a6a6a] bg-[#161616] p-0 text-xl leading-7 text-white">{r + 2}</th>
              {LETTERS.map((l, c) => (
                <td key={l} className={"relative border-r-2 border-b-2 border-[#d4d4d4] p-0 pl-1 text-[21px] leading-7 font-medium whitespace-nowrap " + (row ? row.color : "")}>
                  {row && c === 0 && <span className="absolute top-0 left-0 size-3 bg-[#2f7d22] [clip-path:polygon(0_0,100%_0,0_100%)]" />}
                  <span className="relative">{row?.cells[c]}</span>
                </td>
              ))}
            </tr>
          );
        })}
      </tbody>
    </table>
  </main>
);

const SheetTabs = () => (
  <nav aria-label="Sheets" className="relative flex h-[52px] shrink-0 border-b-2 border-black bg-[#222]">
    <div className="absolute inset-x-0 top-0 h-0.5 bg-[#636363]" />
    <div className="flex w-[120px] shrink-0 items-center gap-8 bg-[#333] pt-1 pl-[30px]">
      <button type="button" aria-label="Previous sheet" className="h-5 w-3.5 bg-[#6b6b6b] [clip-path:polygon(100%_0,100%_100%,0_50%)]" />
      <button type="button" aria-label="Next sheet" className="h-5 w-3.5 bg-[#b9b9b9] [clip-path:polygon(0_0,100%_50%,0_100%)]" />
    </div>
    <div className="flex min-w-0 flex-1 overflow-hidden border-l-2 border-[#555] text-2xl whitespace-nowrap text-[#868686]">
      {SHEETS.map((s) =>
        s.name === "Markers" ? (
          <div key={s.name} className={"relative shrink-0 bg-[#333] " + s.width}>
            <button type="button" className="h-[46px] w-full rounded-b-md border-b-2 border-[#636363] bg-white pt-1 font-semibold text-[#3c7a47]">{s.name}</button>
          </div>
        ) : (
          <button key={s.name} type="button" className={"h-[43px] shrink-0 border-r-2 border-[#666] pt-1 " + s.width}>
            {s.name}
          </button>
        ),
      )}
      <button type="button" className="h-[43px] shrink-0 pt-1 pl-9">Video &amp;</button>
    </div>
    <div className="relative -ml-16 w-16 shrink-0 bg-gradient-to-r from-transparent to-[#333]" />
    <div className="flex w-[138px] shrink-0 items-start bg-[#333]">
      <button type="button" aria-label="Add sheet" className="flex h-[43px] w-[78px] items-center justify-center border-x-2 border-[#666] pt-1">
        <svg className="size-5" viewBox="0 0 20 20" stroke="#c4c4c4" strokeWidth="3.500"><path d="M10 0v20M0 10h20" /></svg>
      </button>
    </div>
  </nav>
);

const StatusBar = () => (
  <footer className="flex h-11 shrink-0 items-center bg-gradient-to-b from-[#4a4a4a] to-[#3c3c3c] pr-12 pl-12 text-2xl text-white">
    <span>Ready</span>
    <button type="button" className="ml-[38px] flex items-center gap-2.5"><AccessibilityIcon />Accessibility: Investigate</button>
    <div className="ml-auto flex h-full items-center">
      <button type="button" aria-label="Normal view" className="flex h-full w-[74px] items-center justify-center bg-[#636363]">
        <svg className="h-[26px] w-[28px]" viewBox="0 0 28 26" fill="none" stroke="#fff" strokeWidth="2"><path d="M1 1h26v24H1ZM1 9h26M1 17h26M10 1v24M18.500 1v24" /></svg>
      </button>
      <button type="button" aria-label="Page layout view" className="ml-5">
        <svg className="h-[26px] w-[28px]" viewBox="0 0 28 26" fill="none" stroke="#fff" strokeWidth="2"><path d="M1 1h26v24H1ZM6.500 5h15v16h-15ZM9.500 9h9M9.500 13h9M9.500 17h9" /></svg>
      </button>
      <button type="button" aria-label="Page break view" className="ml-11">
        <svg className="h-[26px] w-[28px]" viewBox="0 0 28 26" fill="none" stroke="#fff" strokeWidth="2"><path d="M1 1h26v24H1ZM1 15h16V1M9 1v14" /></svg>
      </button>
      <button type="button" aria-label="Zoom out" className="ml-[38px] h-[3px] w-4 bg-white" />
      <input
        type="range"
        aria-label="Zoom level"
        min={0}
        max={200}
        defaultValue={100}
        className="ml-3.5 h-2 w-[200px] appearance-none rounded-full bg-[#7d7d7d] [&::-webkit-slider-thumb]:h-7 [&::-webkit-slider-thumb]:w-9 [&::-webkit-slider-thumb]:appearance-none [&::-webkit-slider-thumb]:rounded-full [&::-webkit-slider-thumb]:bg-[#e2e2e2]"
      />
      <button type="button" aria-label="Zoom in" className="ml-3.5">
        <svg className="size-4" viewBox="0 0 16 16" stroke="#fff" strokeWidth="3"><path d="M8 0v16M0 8h16" /></svg>
      </button>
      <span className="ml-[34px]">100%</span>
    </div>
  </footer>
);

export default function App() {
  return (
    <div className="flex h-screen flex-col bg-white px-28 pt-[76px] pb-37 font-['Inter',sans-serif]">
      <div className="relative flex min-h-0 flex-1 flex-col overflow-hidden rounded-[28px] bg-[#282828] shadow-[0_0_0_1px_#111,0_46px_76px_rgba(0,0,0,0.6)]">
        <TitleBar />
        <MenuBar />
        <Ribbon />
        <FormulaBar />
        <div className="h-1.5 shrink-0 bg-gradient-to-b from-[#8e8e8e] via-white to-[#9a9a9a]" />
        <Sheet />
        <SheetTabs />
        <StatusBar />
        <div className="pointer-events-none absolute inset-0 rounded-[28px] border-2 border-white/25" />
      </div>
    </div>
  );
}
